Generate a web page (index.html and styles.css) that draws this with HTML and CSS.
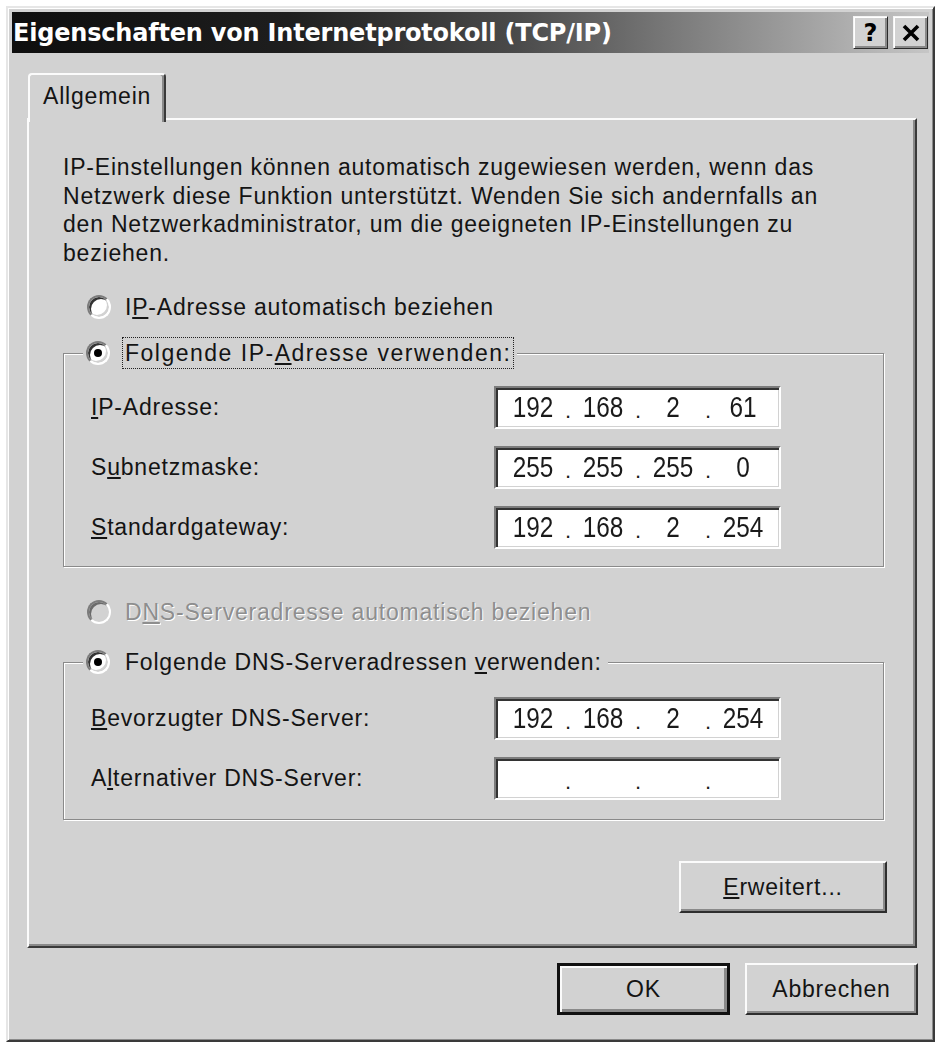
FILE: index.html
```html
<!DOCTYPE html>
<html lang="de">
<head>
<meta charset="utf-8">
<title>Eigenschaften von Internetprotokoll (TCP/IP)</title>
<link rel="stylesheet" href="styles.css">
</head>
<body>
<div class="window">
  <div class="titlebar">
    <span class="title">Eigenschaften von Internetprotokoll (TCP/IP)</span>
    <div class="caption-buttons">
      <span class="cbtn help">?</span>
      <span class="cbtn close"><svg width="20" height="18" viewBox="0 0 20 18"><path d="M3 2 L17 16 M17 2 L3 16" stroke="#000" stroke-width="3.6" fill="none"/></svg></span>
    </div>
  </div>
  <div class="content">
    <div class="tabs"><div class="tab">Allgemein</div></div>
    <div class="panel">
      <p class="desc">IP-Einstellungen können automatisch zugewiesen werden, wenn das<br>Netzwerk diese Funktion unterstützt. Wenden Sie sich andernfalls an<br>den Netzwerkadministrator, um die geeigneten IP-Einstellungen zu<br>beziehen.</p>

      <div class="option opt-auto-ip"><span class="radio"></span><span class="label">I<u>P</u>-Adresse automatisch beziehen</span></div>

      <fieldset class="group group-ip">
        <legend><span class="legend-inner"><span class="radio"><span class="dot"></span></span><span class="label focus">Folgende IP-<u>A</u>dresse verwenden:</span></span></legend>
        <div class="rows">
          <span class="row-label"><u>I</u>P-Adresse:</span>
          <div class="ip"><span class="oct">192</span><span class="sep">.</span><span class="oct">168</span><span class="sep">.</span><span class="oct">2</span><span class="sep">.</span><span class="oct">61</span></div>
          <span class="row-label">S<u>u</u>bnetzmaske:</span>
          <div class="ip"><span class="oct">255</span><span class="sep">.</span><span class="oct">255</span><span class="sep">.</span><span class="oct">255</span><span class="sep">.</span><span class="oct">0</span></div>
          <span class="row-label"><u>S</u>tandardgateway:</span>
          <div class="ip"><span class="oct">192</span><span class="sep">.</span><span class="oct">168</span><span class="sep">.</span><span class="oct">2</span><span class="sep">.</span><span class="oct">254</span></div>
        </div>
      </fieldset>

      <div class="option opt-auto-dns disabled"><span class="radio"></span><span class="label">D<u>N</u>S-Serveradresse automatisch beziehen</span></div>

      <fieldset class="group group-dns">
        <legend><span class="legend-inner"><span class="radio"><span class="dot"></span></span><span class="label">Folgende DNS-Serveradressen <u>v</u>erwenden:</span></span></legend>
        <div class="rows">
          <span class="row-label"><u>B</u>evorzugter DNS-Server:</span>
          <div class="ip"><span class="oct">192</span><span class="sep">.</span><span class="oct">168</span><span class="sep">.</span><span class="oct">2</span><span class="sep">.</span><span class="oct">254</span></div>
          <span class="row-label">A<u>l</u>ternativer DNS-Server:</span>
          <div class="ip"><span class="oct"></span><span class="sep">.</span><span class="oct"></span><span class="sep">.</span><span class="oct"></span><span class="sep">.</span><span class="oct"></span></div>
        </div>
      </fieldset>

      <div class="advanced-row"><button class="btn btn-advanced"><u>E</u>rweitert...</button></div>
    </div>
    <div class="footer">
      <button class="btn btn-default">OK</button>
      <button class="btn">Abbrechen</button>
    </div>
  </div>
</div>
</body>
</html>
```

FILE: styles.css
```css
* { box-sizing: border-box; }

html, body {
  margin: 0;
  padding: 0;
  background: #ffffff;
}

body {
  font-family: "Liberation Sans", Arial, sans-serif;
  color: #141414;
}

.window {
  margin: 6px 0 0 6px;
  width: 929px;
  height: 1036px;
  background: #d2d2d2;
  border: 2px solid;
  border-color: #e6e6e6 #3a3a3a #3a3a3a #e6e6e6;
  box-shadow: inset 1px 1px 0 #ffffff, inset -1px -1px 0 #8a8a8a;
  padding: 4px;
  display: flex;
  flex-direction: column;
}

/* ---------- title bar ---------- */
.titlebar {
  height: 41px;
  flex: none;
  display: flex;
  align-items: center;
  justify-content: space-between;
  background: linear-gradient(to right, #0e0e0e 0%, #1e1e1e 30%, #4a4a4a 55%, #8a8a8a 78%, #c6c6c6 100%);
  padding-left: 1px;
}

.title {
  color: #ffffff;
  font-family: "DejaVu Sans", sans-serif;
  font-weight: bold;
  font-size: 24px;
  letter-spacing: -0.2px;
}

.caption-buttons {
  display: flex;
  gap: 5px;
  margin-right: 1px;
}

.cbtn {
  width: 35px;
  height: 33px;
  display: flex;
  align-items: center;
  justify-content: center;
  background: #d2d2d2;
  border: 1px solid;
  border-color: #f4f4f4 #2a2a2a #2a2a2a #f4f4f4;
  box-shadow: inset 1px 1px 0 #ffffff, inset -2px -2px 0 #8a8a8a;
  color: #000;
}

.help {
  font-family: "DejaVu Sans", sans-serif;
  font-weight: bold;
  font-size: 24px;
  line-height: 1;
}

/* ---------- content ---------- */
.content {
  flex: 1;
  padding: 20px 12px 0 15px;
  display: flex;
  flex-direction: column;
  font-size: 23px;
  letter-spacing: 0.8px;
}

.tabs {
  display: flex;
  height: 47px;
  margin-bottom: -2px;
  position: relative;
  z-index: 1;
}

.tab {
  margin-left: 1px;
  width: 138px;
  height: 49px;
  background: #d2d2d2;
  border-top: 2px solid #fbfbfb;
  border-left: 2px solid #fbfbfb;
  border-right: 2px solid #3a3a3a;
  border-radius: 4px 4px 0 0;
  box-shadow: inset -2px 0 0 #8a8a8a;
  padding: 8px 0 0 13px;
}

.panel {
  height: 830px;
  flex: none;
  border: 2px solid;
  border-color: #fbfbfb #3a3a3a #3a3a3a #fbfbfb;
  box-shadow: inset -2px -2px 0 #8a8a8a;
  padding: 33px 31px 0 34px;
  display: flex;
  flex-direction: column;
}

.desc {
  margin: 0;
  line-height: 28.5px;
}

/* ---------- radio buttons ---------- */
.option {
  display: flex;
  align-items: center;
  height: 30px;
  padding-left: 24px;
  gap: 14px;
}

.opt-auto-ip { margin-top: 25px; }
.opt-auto-dns { margin-top: 30px; }

.radio {
  flex: none;
  width: 24px;
  height: 24px;
  border-radius: 50%;
  border: 2px solid;
  border-color: #7c7c7c #ffffff #ffffff #7c7c7c;
  box-shadow: inset 2px 2px 0 #333333, inset -2px -2px 0 #d2d2d2;
  background: #ffffff;
  display: inline-flex;
  align-items: center;
  justify-content: center;
}

.dot {
  width: 8px;
  height: 8px;
  border-radius: 50%;
  background: #000;
}

.disabled .radio {
  background: #d2d2d2;
  box-shadow: inset 2px 2px 0 #6a6a6a, inset -2px -2px 0 #d2d2d2;
}

.disabled .label {
  color: #8e8e8e;
  text-shadow: 1px 1px 0 #ffffff;
}

/* ---------- group boxes ---------- */
.group {
  margin: 0;
  min-inline-size: 0;
  width: 821px;
  border: 1px solid #8a8a8a;
  box-shadow: 1px 1px 0 #ffffff, inset 1px 1px 0 #ffffff;
  padding: 17px 0 17px 27px;
}

.group-ip { margin-top: 15px; }
.group-dns { margin-top: 19px; padding-top: 19px; padding-bottom: 19px; }

.group legend {
  padding: 0 3px;
  margin-left: -8px;
  background: #d2d2d2;
}

.legend-inner {
  display: flex;
  align-items: center;
  gap: 12px;
  height: 32px;
}

.label { white-space: nowrap; }

.legend-inner .label {
  line-height: 28px;
  padding: 1px 2px 1px 2px;
  border: 1px dotted transparent;
}

.legend-inner .label.focus {
  border-color: #222;
  letter-spacing: 1.5px;
}

.rows {
  display: grid;
  grid-template-columns: 403px 287px;
  row-gap: 17px;
  align-items: center;
}

.ip {
  width: 287px;
  height: 43px;
  display: flex;
  align-items: center;
  padding-left: 9px;
  background: #ffffff;
  border: 2px solid;
  border-color: #7c7c7c #ffffff #ffffff #7c7c7c;
  box-shadow: inset 2px 2px 0 #333333, inset -1px -1px 0 #d2d2d2;
  font-size: 29px;
  letter-spacing: 0;
  color: #1a1a1a;
}

.oct {
  width: 56px;
  text-align: center;
  transform: scaleX(0.84);
}

.sep {
  width: 14px;
  text-align: center;
  font-size: 22px;
  padding-top: 6px;
}

/* ---------- buttons ---------- */
.btn {
  font-family: "Liberation Sans", Arial, sans-serif;
  font-size: 23px;
  letter-spacing: 0.8px;
  color: #141414;
  background: #d2d2d2;
  border: 2px solid;
  border-color: #fbfbfb #2e2e2e #2e2e2e #fbfbfb;
  box-shadow: inset -2px -2px 0 #8a8a8a;
  height: 52px;
  padding: 0;
}

.advanced-row {
  display: flex;
  justify-content: flex-end;
  margin-top: 41px;
  margin-right: -3px;
}

.btn-advanced { width: 208px; }

.footer {
  display: flex;
  justify-content: flex-end;
  gap: 15px;
  padding-top: 15px;
  margin-right: -1px;
}

.footer .btn { width: 173px; }

.btn-default {
  border: 3px solid #111;
  box-shadow: inset 2px 2px 0 #fbfbfb, inset -3px -3px 0 #8a8a8a;
}
```
